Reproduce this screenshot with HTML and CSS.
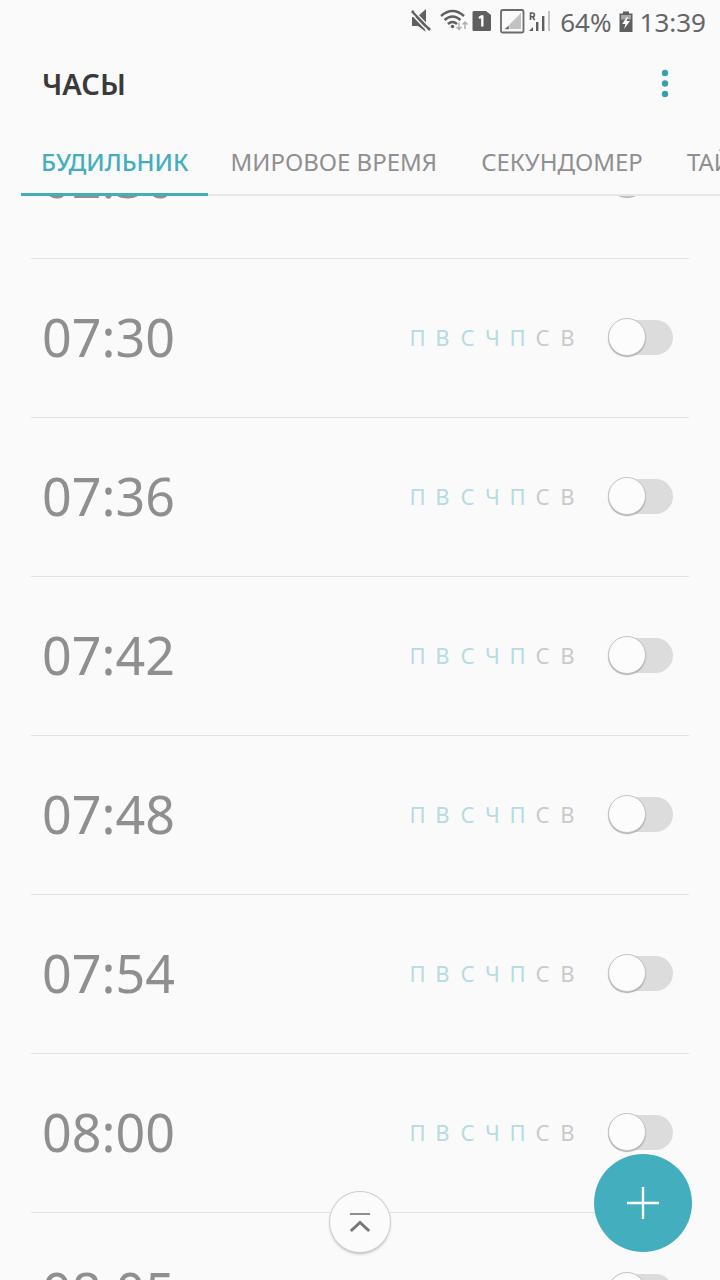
FILE: index.html
```html
<!DOCTYPE html>
<html lang="ru">
<head>
<meta charset="utf-8">
<meta name="viewport" content="width=device-width, initial-scale=1">
<title>Часы</title>
<link rel="stylesheet" href="styles.css">
</head>
<body>
<div class="app">
  <div class="status">
    <svg width="146" height="36" viewBox="0 0 146 36" aria-hidden="true">
      <path d="M4 13h5l9-8v23l-8-6H4z" fill="#5f5f5f"/>
      <path d="M3 9.500L20.500 28" stroke="#fafafa" stroke-width="1.600"/>
      <path d="M18 20l1 8" stroke="#fafafa" stroke-width="3"/>
      <path d="M4 7L22 26" stroke="#5f5f5f" stroke-width="2.600"/>
      <path d="M6.500 7.500L21 22.500" stroke="#fafafa" stroke-width="1.200"/>
      <path d="M33 12q11.500-10 23 0M36.500 16q8-7 16 0M40 20q4.500-4 9 0" fill="none" stroke="#5f5f5f" stroke-width="2.400"/>
      <circle cx="44.500" cy="22.500" r="1.800" fill="#5f5f5f"/>
      <path d="M51 18.500v7M48.500 23l2.500 2.500 2.500-2.500M57 25v-7M54.500 20.500l2.500-2.500 2.500 2.500" fill="none" stroke="#b0b0b0" stroke-width="1.500"/>
      <path d="M66 7h12l5 4v14.500a1.500 1.500 0 0 1-1.500 1.500H66a1.500 1.500 0 0 1-1.500-1.500v-17A1.500 1.500 0 0 1 66 7z" fill="#5f5f5f"/>
      <path d="M71 14l2.500-1.500h.8v10" fill="none" stroke="#fff" stroke-width="2.400"/>
      <rect x="93" y="6" width="22.500" height="22.500" rx="1.500" fill="none" stroke="#6b6b6b" stroke-width="1.800"/>
      <path d="M97 25L113 9v16z" fill="#c2c2c2"/>
      <path d="M96 25.500l5-4.500v4.500z" fill="#5f5f5f" stroke="#fafafa" stroke-width=".6"/>
      <path d="M122.500 16V9h2a1.900 1.900 0 0 1 0 3.800h-2M124.500 12.800l2.200 3.200" fill="none" stroke="#5f5f5f" stroke-width="1.600"/>
      <path d="M121 27l4-4v4zM128 18h2.400v9H128zM134 12h2.400v15H134z" fill="#5f5f5f"/>
      <path d="M140 7h2v20h-2z" fill="#c2c2c2"/>
    </svg>
    <span>64%</span>
    <svg class="battery" width="16" height="24" viewBox="0 0 16 24" aria-hidden="true">
      <path d="M5 1.500h6v2h3.500v18.500h-13V3.500H5z" fill="#5f5f5f"/>
      <path d="M3 5h10v4.500H3z" fill="#a8a8a8"/>
      <path d="M9 7l-5 7h3.500L6 19l6-8H8.500L10 7z" fill="#fff"/>
    </svg>
    <span>13:39</span>
  </div>

  <header class="header">
    <h1 class="title">ЧАСЫ</h1>
    <button class="more" type="button" aria-label="Ещё">
      <svg width="8" height="30" viewBox="0 0 8 30" fill="#3c9fae"><circle cx="4" cy="4" r="3.200"/><circle cx="4" cy="14.500" r="3.200"/><circle cx="4" cy="25" r="3.200"/></svg>
    </button>
  </header>

  <nav class="tabs">
    <a class="tab tab-active" href="#alarm" aria-current="page">БУДИЛЬНИК</a>
    <a class="tab" href="#world">МИРОВОЕ ВРЕМЯ</a>
    <a class="tab" href="#stopwatch">СЕКУНДОМЕР</a>
    <a class="tab" href="#timer">ТАЙМЕР</a>
  </nav>

  <main class="view">
    <ul class="alarms" id="alarms"></ul>
  </main>

  <button class="to-top" type="button" aria-label="Наверх">
    <svg width="22" height="22" viewBox="0 0 22 22" fill="none"><path d="M1 3h20" stroke="#8f8f8f" stroke-width="2"/><path d="M1.800 20L11 11.500l9.200 8.500" stroke="#777" stroke-width="3"/></svg>
  </button>
  <button class="add" type="button" aria-label="Добавить будильник">
    <svg width="32" height="32" viewBox="0 0 32 32"><path d="M16 0v32M0 16h32" stroke="#fff" stroke-width="2.400"/></svg>
  </button>
</div>
<script src="app.js"></script>
</body>
</html>
```
FILE: styles.css
```css
*, *::before { box-sizing: border-box; }

body {
  margin: 0;
  background: #fafafa;
  color: #8f8f8f;
  font-family: "Noto Sans", "Open Sans", sans-serif;
}

button {
  border: 0;
  padding: 0;
  background: none;
  display: flex;
  align-items: center;
  justify-content: center;
  cursor: pointer;
}

.app {
  position: relative;
  height: 100vh;
  display: flex;
  flex-direction: column;
  overflow: hidden;
}

.status {
  flex: none;
  display: flex;
  align-items: center;
  justify-content: flex-end;
  height: 44px;
  padding-right: 14px;
  gap: 6px;
  color: #666;
  font-size: 26px;
  line-height: 44px;
}

.header {
  flex: none;
  display: flex;
  align-items: center;
  justify-content: space-between;
  height: 80px;
  padding: 0 40px 0 42px;
}

.title {
  margin: 0;
  color: #3a3a3a;
  font-size: 29px;
  font-weight: 600;
  line-height: 40px;
}

.more { width: 30px; height: 48px; }

.tabs {
  flex: none;
  display: flex;
  height: 72px;
  margin-left: 21px;
  overflow: hidden;
  box-shadow: inset 0 -2px #e6e6e6;
}

.tab {
  flex: none;
  padding: 0 22px;
  color: #8f8f8f;
  font-size: 24px;
  line-height: 76px;
  text-decoration: none;
  white-space: nowrap;
}

.tab-active {
  padding: 0 20px;
  border-bottom: 3px solid #44aebd;
  color: #44aebd;
  font-weight: 500;
}

.view {
  flex: 1;
  min-height: 0;
  overflow: hidden;
}

.alarms {
  list-style: none;
  margin: -96px 31px 0;
  padding: 0;
}

.alarm {
  display: flex;
  align-items: center;
  height: 159px;
  padding: 0 16px 2px 11px;
  border-bottom: 1px solid #e2e2e2;
}

.time {
  flex: 1;
  font-size: 52px;
  line-height: 72px;
}

.days {
  display: grid;
  grid-template-columns: repeat(7, 25px);
  margin-right: 28px;
  font-size: 22px;
  line-height: 32px;
  text-align: center;
  color: #cacaca;
}

.day-on { color: #b4dce2; }

.switch {
  appearance: none;
  position: relative;
  width: 65px;
  height: 35px;
  margin: 0;
  border-radius: 18px;
  background: #dcdcdc;
}

.switch::before {
  content: "";
  position: absolute;
  left: 0;
  top: -2px;
  width: 38px;
  height: 38px;
  border: 1px solid #c4c4c4;
  border-radius: 50%;
  background: #fcfcfc;
  box-shadow: 0 1px 1px #aaa;
}

.switch:checked { background: #a9dbe2; }
.switch:checked::before { left: 27px; }

.to-top {
  position: absolute;
  left: 50%;
  bottom: 28px;
  width: 60px;
  height: 60px;
  margin-left: -30px;
  border-radius: 50%;
  background: #fbfbfb;
  box-shadow: 0 0 0 1px #cdcdcd, 0 2px 3px #bbb;
}

.add {
  position: absolute;
  right: 28px;
  bottom: 28px;
  width: 98px;
  height: 98px;
  border-radius: 50%;
  background: #42aebe;
}
```
FILE: app.js
```js
const times = ["02:30", "07:30", "07:36", "07:42", "07:48", "07:54", "08:00", "08:05"];
const days = ["П", "В", "С", "Ч", "П", "С", "В"];

document.getElementById("alarms").innerHTML = times.map((time, i) => `
  <li class="alarm">
    <label class="time" for="alarm-${i}">${time}</label>
    <div class="days">${days.map((d, n) => `<span${n < 5 ? ' class="day-on"' : ""}>${d}</span>`).join("")}</div>
    <input class="switch" type="checkbox" role="switch" id="alarm-${i}">
  </li>`).join("");
```
